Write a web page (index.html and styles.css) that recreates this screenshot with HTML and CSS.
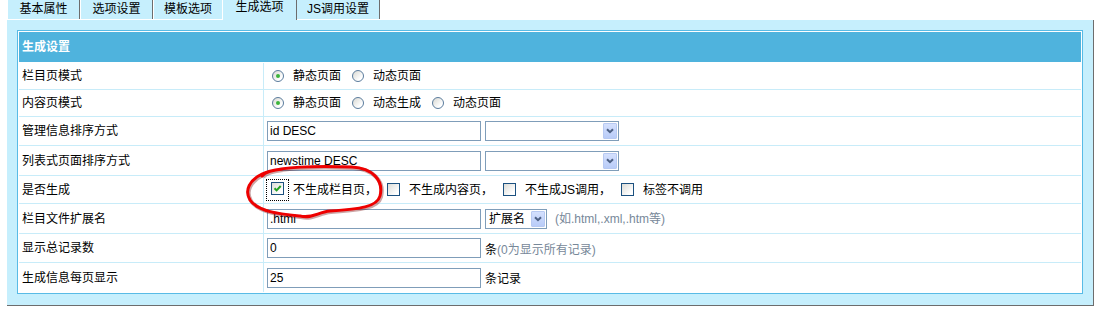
FILE: index.html
```html
<!DOCTYPE html>
<html lang="zh-CN">
	<head>
		<meta charset="UTF-8" />
		<title>生成选项</title>
		<link rel="stylesheet" href="styles.css">
	</head>

	<body>
		<!-- Tab strip -->
		<div class="tabs">
			<div class="tab">基本属性</div>
			<div class="tab">选项设置</div>
			<div class="tab tab-prev">模板选项</div>
			<div class="tab tab-on">生成选项</div>
			<div class="tab tab-js">JS调用设置</div>
		</div>

		<div class="panel">
			<div class="box">
				<div class="box-head">生成设置</div>

				<div class="row r1">
					<div class="label">栏目页模式</div>
					<div class="value">
						<span class="opt"><span class="radio on"></span>静态页面</span>
						<span class="opt"><span class="radio"></span>动态页面</span>
					</div>
				</div>

				<div class="row r2">
					<div class="label">内容页模式</div>
					<div class="value">
						<span class="opt"><span class="radio on"></span>静态页面</span>
						<span class="opt"><span class="radio"></span>动态生成</span>
						<span class="opt"><span class="radio"></span>动态页面</span>
					</div>
				</div>

				<div class="row r3">
					<div class="label">管理信息排序方式</div>
					<div class="value">
						<input class="field" type="text" value="id DESC" />
						<span class="select sel-wide"><span class="sel-text"></span><span class="sel-btn"><svg width="8" height="6" viewBox="0 0 8 6"><path d="M1 1.2 L4 4.2 L7 1.2" fill="none" stroke="#4d6185" stroke-width="2"/></svg></span></span>
					</div>
				</div>

				<div class="row r4">
					<div class="label">列表式页面排序方式</div>
					<div class="value">
						<input class="field" type="text" value="newstime DESC" />
						<span class="select sel-wide"><span class="sel-text"></span><span class="sel-btn"><svg width="8" height="6" viewBox="0 0 8 6"><path d="M1 1.2 L4 4.2 L7 1.2" fill="none" stroke="#4d6185" stroke-width="2"/></svg></span></span>
					</div>
				</div>

				<div class="row r5">
					<div class="label">是否生成</div>
					<div class="value">
						<span class="focus"><span class="chk on"><svg width="11" height="11" viewBox="0 0 11 11"><path d="M2.5 5.2 L4.6 7.4 L8.7 3" fill="none" stroke="#21a121" stroke-width="2"/></svg></span></span>
						<span class="chk-text first">不生成栏目页，</span>
						<span class="chk"></span>
						<span class="chk-text">不生成内容页，</span>
						<span class="chk"></span>
						<span class="chk-text">不生成JS调用，</span>
						<span class="chk"></span>
						<span class="chk-text">标签不调用</span>
					</div>
				</div>

				<div class="row r6">
					<div class="label">栏目文件扩展名</div>
					<div class="value">
						<input class="field" type="text" value=".html" />
						<span class="select sel-ext"><span class="sel-text">扩展名</span><span class="sel-btn"><svg width="8" height="6" viewBox="0 0 8 6"><path d="M1 1.2 L4 4.2 L7 1.2" fill="none" stroke="#4d6185" stroke-width="2"/></svg></span></span>
						<span class="hint ext-hint">(如.html,.xml,.htm等)</span>
					</div>
				</div>

				<div class="row r7">
					<div class="label">显示总记录数</div>
					<div class="value">
						<input class="field" type="text" value="0" />
						<span class="unit">条<span class="hint">(0为显示所有记录)</span></span>
					</div>
				</div>

				<div class="row r8">
					<div class="label">生成信息每页显示</div>
					<div class="value">
						<input class="field" type="text" value="25" />
						<span class="unit">条记录</span>
					</div>
				</div>
			</div>
		</div>

		<!-- Hand-drawn red mark over the first checkbox -->
		<svg class="mark" width="1101" height="313" viewBox="0 0 1101 313">
			<path d="M262 176 C270 166, 320 166, 352 167 C372 168, 384 180, 380 196 C377 207, 360 209, 330 211 C318 212, 312 219, 300 216 C280 214, 258 212, 250 200 C244 190, 250 180, 262 174 C268 171, 275 170, 282 169" fill="none" stroke="rgba(110,0,0,0.35)" stroke-width="4" transform="translate(1 1)"/>
			<path d="M262 176 C270 166, 320 166, 352 167 C372 168, 384 180, 380 196 C377 207, 360 209, 330 211 C318 212, 312 219, 300 216 C280 214, 258 212, 250 200 C244 190, 250 180, 262 174 C268 171, 275 170, 282 169" fill="none" stroke="#ee0000" stroke-width="3" stroke-linecap="round"/>
		</svg>
	</body>
</html>
```

FILE: styles.css
```css
body {
	margin: 0;
	background: #fff;
	color: #000;
	font: 12px/14px "Liberation Sans", "Noto Sans CJK SC", sans-serif;
}

/* tabs */
.tabs {
	display: flex;
	align-items: flex-start;
	height: 20px;
	margin-left: 8px;
}

.tab {
	width: 71px;
	height: 19px;
	line-height: 19px;
	text-align: center;
	background: #c6effd;
	border-right: 1px solid #6d6d6d;
	margin-right: 1px;
}

.tab-prev {
	width: 68px;
	border-right-color: #fff;
	margin-right: 0;
}

.tab-on {
	width: 73px;
	height: 20px;
	line-height: 15px;
	margin-right: 0;
}

.tab-js {
	width: 82px;
}

/* panel */
.panel {
	margin-left: 7px;
	width: 1086px;
	padding: 10px 0 11px;
	background: #c6effd;
	border-right: 1px solid #6d6d6d;
	border-bottom: 1px solid #6d6d6d;
	box-sizing: content-box;
}

.box {
	margin: 0 10px;
	border: 1px solid #58bbe6;
	padding: 1px;
	background: #fff;
}

.box-head {
	height: 30px;
	line-height: 30px;
	padding-left: 3px;
	margin-bottom: 1px;
	background: #4fb3dd;
	color: #fff;
	font-weight: bold;
}

/* rows */
.row {
	display: grid;
	grid-template-columns: 244px 1fr;
	box-sizing: border-box;
	border-top: 1px solid #c8ecf9;
}

.r1 { height: 26px; border-top: 0; }
.r2 { height: 27px; }
.r3 { height: 29px; }
.r4 { height: 30px; }
.r5 { height: 28px; }
.r6 { height: 30px; }
.r7 { height: 29px; }
.r8 { height: 30px; }

.label {
	display: flex;
	align-items: center;
	padding-left: 3px;
}

.value {
	display: flex;
	align-items: center;
	padding-left: 3px;
	border-left: 1px solid #c8ecf9;
}

/* radios */
.opt {
	display: inline-flex;
	align-items: center;
	margin-right: 6px;
}

.radio {
	position: relative;
	width: 10px;
	height: 10px;
	margin: 0 9px 0 5px;
	border: 1px solid #5a7b9c;
	border-radius: 50%;
	background: linear-gradient(135deg, #d8d8d2, #fff 75%);
}

.radio.on::after {
	content: "";
	position: absolute;
	left: 3px;
	top: 3px;
	width: 4px;
	height: 4px;
	border-radius: 50%;
	background: #3cb43c;
}

/* checkboxes */
.focus {
	display: inline-flex;
	margin-left: -1px;
	padding: 2px 4px 5px 4px;
	border: 1px dotted #000;
}

.chk {
	display: inline-flex;
	width: 11px;
	height: 11px;
	margin: 0 9px 0 10px;
	border: 1px solid #1c5180;
	background: linear-gradient(135deg, #dcdcd7, #fff 80%);
}

.focus .chk {
	margin: 0;
}

.chk-text.first {
	margin-left: 4px;
}

/* inputs and selects */
.field {
	width: 214px;
	height: 20px;
	box-sizing: border-box;
	margin: 0;
	padding: 0 2px;
	border: 1px solid #7f9db9;
	font: inherit;
	color: #000;
	background: #fff;
}

.select {
	display: inline-flex;
	align-items: center;
	justify-content: space-between;
	height: 20px;
	box-sizing: border-box;
	margin-left: 4px;
	padding: 1px;
	border: 1px solid #7f9db9;
	background: #fff;
}

.sel-wide { width: 134px; }
.sel-ext { width: 62px; }

.sel-text {
	padding-left: 2px;
}

.sel-btn {
	display: inline-flex;
	align-items: center;
	justify-content: center;
	width: 14px;
	height: 16px;
	box-sizing: border-box;
	border: 1px solid #b7c9f2;
	border-radius: 1px;
	background: linear-gradient(#d4e0fd, #b9ccf8);
}

.hint {
	color: #778899;
}

.ext-hint {
	margin-left: 8px;
}

.unit {
	margin-left: 4px;
	padding-top: 3px;
}

/* annotation */
.mark {
	position: absolute;
	left: 0;
	top: 0;
	pointer-events: none;
}
```
